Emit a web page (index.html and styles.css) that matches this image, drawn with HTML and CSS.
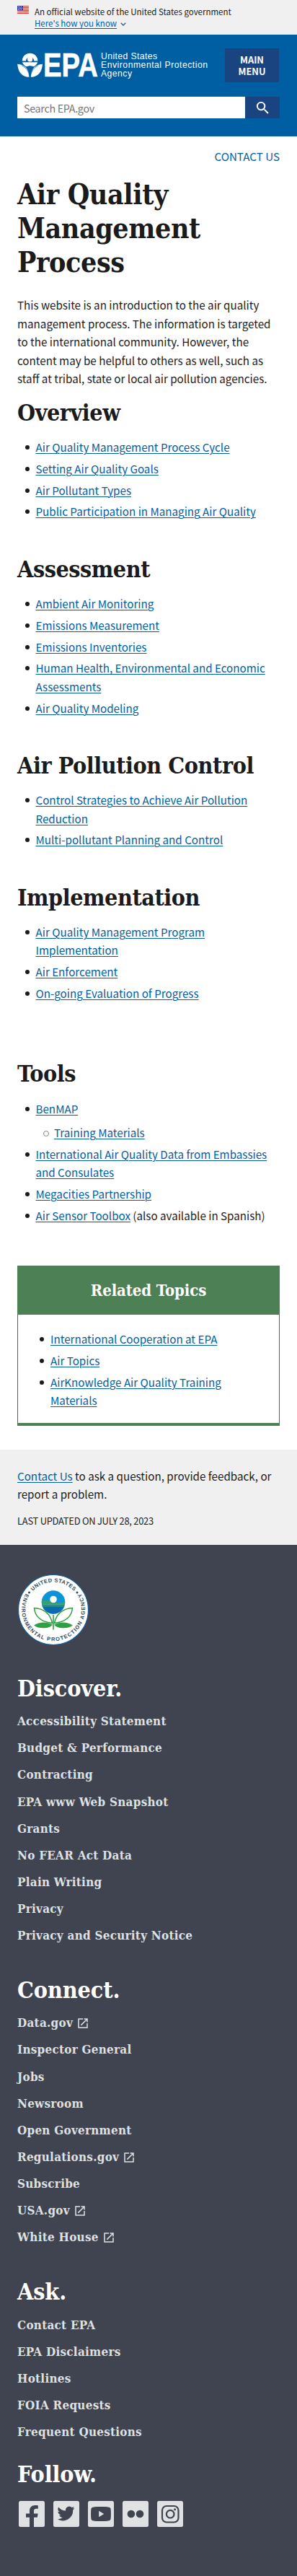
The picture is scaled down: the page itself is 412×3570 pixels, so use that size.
FILE: index.html
```html
<!DOCTYPE html>
<html lang="en">
<head>
<meta charset="utf-8">
<meta name="viewport" content="width=device-width, initial-scale=1">
<title>Air Quality Management Process | US EPA</title>
<link rel="stylesheet" href="styles.css">
</head>
<body>
<svg class="defs" width="0" height="0" aria-hidden="true">
  <symbol id="external" viewBox="0 0 24 24"><path d="M19 19H5V5h7V3H3v18h18v-9h-2v7zM14 3v2h3.6l-9.8 9.8 1.4 1.4L19 6.4V10h2V3h-7z"/></symbol>
</svg>

<div class="banner">
  <svg class="banner-flag" viewBox="0 0 16 11" width="16" height="11" aria-hidden="true">
    <path fill="#fff" d="M0 0h16v11H0z"/>
    <path fill="#d8392f" d="M0 0h16v1H0zM0 2h16v1H0zM0 4h16v1H0zM0 6h16v1H0zM0 8h16v1H0zM0 10h16v1H0z"/>
    <path fill="#2a35b3" d="M0 0h8v6.5H0z"/>
    <path fill="#fff" d="M1 1h1v1H1zM3 1h1v1H3zM5 1h1v1H5zM2 2.8h1v1H2zM4 2.8h1v1H4zM6 2.8h1v1H6zM1 4.6h1v1H1zM3 4.6h1v1H3zM5 4.6h1v1H5z"/>
  </svg>
  <div class="banner-text">
    <p>An official website of the United States government</p>
    <p><a href="#">Here's how you know</a><svg class="chevron" viewBox="0 0 8 5" width="8" height="5"><path d="M.7.8 4 4 7.300.8" fill="none" stroke="#2c5f8a" stroke-width="1.3"/></svg></p>
  </div>
</div>

<header class="header">
  <div class="header-top">
    <svg class="logo" viewBox="0 0 268 40" width="268" height="40" role="img" aria-label="US EPA">
      <g fill="#fff">
        <path d="M6.800 13.500a10.800 10.800 0 0 1 21.600 0h-5.200a5.600 5.600 0 0 0-11.200 0z"/>
        <circle cx="17.600" cy="11" r="3.600"/>
        <path d="M7 15.200h21.200c-1 2.800-2.900 4.700-5.400 6l-5.200-1.200-5.200 1.200c-2.500-1.300-4.400-3.200-5.400-6z"/>
        <path d="M.2 17.800C9.500 18.200 16 23.500 16.600 35.800 7 36 1 29.500.2 17.800z"/>
        <path d="M35 17.800C25.700 18.200 19.200 23.500 18.600 35.800 28.200 36 34.200 29.500 35 17.800z"/>
      </g>
      <path d="M6 19.500Q15.500 24 17.200 36M29.200 19.500Q19.700 24 18 36" fill="none" stroke="#005ea2" stroke-width=".7"/>
      <text class="logo-mark" x="36" y="35.300" textLength="76" lengthAdjust="spacingAndGlyphs">EPA</text>
      <text class="logo-name" x="116" y="10.900" textLength="78">United States</text>
      <text class="logo-name" x="116" y="23" textLength="148">Environmental Protection</text>
      <text class="logo-name" x="116" y="35.200" textLength="43">Agency</text>
    </svg>
    <button class="menu" type="button">MAIN MENU</button>
  </div>
  <form class="search">
    <div class="search-field">Search EPA.gov</div>
    <button class="search-button" type="button" aria-label="Search">
      <svg viewBox="0 0 24 24" width="23" height="23"><path fill="#fff" d="M15.500 14h-.79l-.28-.27A6.471 6.471 0 0 0 16 9.500 6.500 6.500 0 1 0 9.500 16c1.610 0 3.090-.59 4.230-1.570l.27.28v.79l5 4.990L20.490 19l-4.990-5zm-6 0C7.010 14 5 11.990 5 9.500S7.010 5 9.500 5 14 7.010 14 9.500 11.990 14 9.500 14z"/></svg>
    </button>
  </form>
</header>

<main class="main">
  <div class="contact"><a href="#">CONTACT US</a></div>
  <h1>Air Quality Management Process</h1>
  <p class="intro">This website is an introduction to the air quality management process. The information is targeted to the international community. However, the content may be helpful to others as well, such as staff at tribal, state or local air pollution agencies.</p>

  <section class="overview">
    <h2>Overview</h2>
    <ul class="list">
      <li><a href="#">Air Quality Management Process Cycle</a></li>
      <li><a href="#">Setting Air Quality Goals</a></li>
      <li><a href="#">Air Pollutant Types</a></li>
      <li><a href="#">Public Participation in Managing Air Quality</a></li>
    </ul>
  </section>
  <section class="topic">
    <h2>Assessment</h2>
    <ul class="list">
      <li><a href="#">Ambient Air Monitoring</a></li>
      <li><a href="#">Emissions Measurement</a></li>
      <li><a href="#">Emissions Inventories</a></li>
      <li><a href="#">Human Health, Environmental and Economic Assessments</a></li>
      <li><a href="#">Air Quality Modeling</a></li>
    </ul>
  </section>
  <section class="topic">
    <h2>Air Pollution Control</h2>
    <ul class="list">
      <li><a href="#">Control Strategies to Achieve Air Pollution Reduction</a></li>
      <li><a href="#">Multi-pollutant Planning and Control</a></li>
    </ul>
  </section>
  <section class="topic">
    <h2>Implementation</h2>
    <ul class="list">
      <li><a href="#">Air Quality Management Program Implementation</a></li>
      <li><a href="#">Air Enforcement</a></li>
      <li><a href="#">On-going Evaluation of Progress</a></li>
    </ul>
  </section>
  <section class="tools">
    <h2>Tools</h2>
    <ul class="list">
      <li><a href="#">BenMAP</a>
        <ul class="sublist"><li><a href="#">Training Materials</a></li></ul>
      </li>
      <li><a href="#">International Air Quality Data from Embassies and Consulates</a></li>
      <li><a href="#">Megacities Partnership</a></li>
      <li><a href="#">Air Sensor Toolbox</a> (also available in Spanish)</li>
    </ul>
  </section>

  <aside class="box">
    <h3>Related Topics</h3>
    <ul class="list">
      <li><a href="#">International Cooperation at EPA</a></li>
      <li><a href="#">Air Topics</a></li>
      <li><a href="#">AirKnowledge Air Quality Training Materials</a></li>
    </ul>
  </aside>
</main>

<div class="feedback">
  <p><a href="#">Contact Us</a> to ask a question, provide feedback, or report a problem.</p>
  <p class="updated">LAST UPDATED ON JULY 28, 2023</p>
</div>

<footer class="footer">
  <svg class="seal" viewBox="0 0 100 100" width="100" height="100" role="img" aria-label="EPA seal">
    <defs>
      <path id="arc-top" d="M11.500 50a38.500 38.500 0 0 1 77 0"/>
      <path id="arc-bottom" d="M18.500 18.500A44 44 0 1 0 81.500 18.500"/>
    </defs>
    <circle cx="50" cy="50" r="48.500" fill="#fff" stroke="#1b5c93" stroke-width="1.200"/>
    <text class="seal-text"><textPath href="#arc-top" startOffset="50%" text-anchor="middle" textLength="64">UNITED STATES</textPath></text>
    <text class="seal-text"><textPath href="#arc-bottom" startOffset="50%" text-anchor="middle" textLength="184">ENVIRONMENTAL PROTECTION AGENCY</textPath></text>
    <g fill="#274b66"><circle cx="16.500" cy="26" r="1.500"/><circle cx="83" cy="26" r="1.500"/></g>
    <clipPath id="ball"><circle cx="50" cy="39.500" r="16.300"/></clipPath>
    <g clip-path="url(#ball)">
      <path fill="#0c93d8" d="M30 20h40v20H30z"/>
      <path fill="#2fa36b" d="M30 38.500q10-3 20 0t20 0v5H30z"/>
      <path fill="#0a68b4" d="M30 43.500h40v15H30z"/>
      <path fill="none" stroke="#2fa36b" stroke-width=".8" d="M30 45.500h40"/>
    </g>
    <circle cx="50" cy="35.500" r="4.800" fill="#fff"/>
    <g fill="#fff" stroke="#2fa043" stroke-width="1.500">
      <path d="M23.500 47.500c1 12 9 19 25 21C46 55 36 48 23.500 47.500z"/>
      <path d="M76.500 47.500c-1 12-9 19-25 21C54 55 64 48 76.500 47.500z"/>
    </g>
    <g fill="#2fa043">
      <path d="M23 71.500c8-5.500 18-5 26-1-4 6-19 6.500-26 1zM77 71.500c-8-5.500-18-5-26-1 4 6 19 6.500 26 1z"/>
      <path d="M49.200 57h1.600v20.500h-1.600z"/>
    </g>
  </svg>

  <section class="footer-group">
    <h2>Discover.</h2>
    <ul>
      <li><a href="#">Accessibility Statement</a></li>
      <li><a href="#">Budget &amp; Performance</a></li>
      <li><a href="#">Contracting</a></li>
      <li><a href="#">EPA www Web Snapshot</a></li>
      <li><a href="#">Grants</a></li>
      <li><a href="#">No FEAR Act Data</a></li>
      <li><a href="#">Plain Writing</a></li>
      <li><a href="#">Privacy</a></li>
      <li><a href="#">Privacy and Security Notice</a></li>
    </ul>
  </section>
  <section class="footer-group">
    <h2>Connect.</h2>
    <ul>
      <li><a href="#">Data.gov</a><svg class="ext"><use href="#external"/></svg></li>
      <li><a href="#">Inspector General</a></li>
      <li><a href="#">Jobs</a></li>
      <li><a href="#">Newsroom</a></li>
      <li><a href="#">Open Government</a></li>
      <li><a href="#">Regulations.gov</a><svg class="ext"><use href="#external"/></svg></li>
      <li><a href="#">Subscribe</a></li>
      <li><a href="#">USA.gov</a><svg class="ext"><use href="#external"/></svg></li>
      <li><a href="#">White House</a><svg class="ext"><use href="#external"/></svg></li>
    </ul>
  </section>
  <section class="footer-group">
    <h2>Ask.</h2>
    <ul>
      <li><a href="#">Contact EPA</a></li>
      <li><a href="#">EPA Disclaimers</a></li>
      <li><a href="#">Hotlines</a></li>
      <li><a href="#">FOIA Requests</a></li>
      <li><a href="#">Frequent Questions</a></li>
    </ul>
  </section>
  <section class="footer-follow">
    <h2>Follow.</h2>
    <div class="social">
      <svg viewBox="0 0 36 36"><rect width="36" height="36" rx="2.500"/><path class="cut" d="M15 36V22.800h-5v-5.200h5v-3.800C15 8.800 18 6 22.700 6c1.600 0 2.900.1 4.100.3v4.500h-2.600c-2.500 0-3.200 1.300-3.200 3.100v3.700h5.600l-.8 5.200H21V36z"/></svg>
      <svg viewBox="0 0 36 36"><rect width="36" height="36" rx="2.500"/><path class="cut" transform="translate(5.400 4.800) scale(1.020)" d="M23.600 4.900a9.700 9.700 0 0 1-2.800.8 4.900 4.900 0 0 0 2.100-2.700 9.700 9.700 0 0 1-3.100 1.200 4.900 4.900 0 0 0-8.300 4.400A13.800 13.800 0 0 1 1.700 3.600a4.900 4.900 0 0 0 1.500 6.500A4.800 4.800 0 0 1 1 9.500c0 2.400 1.700 4.400 3.900 4.900a4.900 4.900 0 0 1-2.200.1 4.900 4.900 0 0 0 4.600 3.400A9.800 9.800 0 0 1 0 19.900a13.900 13.900 0 0 0 21.400-12.300 9.900 9.900 0 0 0 2.200-2.700z"/></svg>
      <svg viewBox="0 0 36 36"><rect width="36" height="36" rx="2.500"/><path class="cut" d="M18 8c10 0 12.500.5 13.400 2.500.7 2 .7 13 0 15C30.500 27.500 28 28 18 28S5.500 27.500 4.600 25.500c-.7-2-.7-13 0-15C5.500 8.500 8 8 18 8z"/><path d="m15.200 13.700 7 4.300-7 4.300z"/></svg>
      <svg viewBox="0 0 36 36"><rect width="36" height="36" rx="2.500"/><g class="cut"><circle cx="11.900" cy="18" r="5.300"/><circle cx="24" cy="18" r="5.300"/></g></svg>
      <svg viewBox="0 0 36 36"><rect width="36" height="36" rx="2.500"/><g class="line"><rect x="7" y="7" width="22.500" height="22.500" rx="6"/><circle cx="18.200" cy="18.200" r="5.300"/></g><circle class="cut" cx="24.600" cy="11.800" r="1.500"/></svg>
    </div>
  </section>
</footer>
</body>
</html>
```

FILE: styles.css
```css
* {
  box-sizing: border-box;
}

body {
  display: flex;
  flex-direction: column;
  min-height: 100vh;
  margin: 0;
  background: #fff;
  color: #1b1b1b;
  font-family: "Noto Sans CJK SC", "Open Sans", sans-serif;
  font-size: 15.18px;
  line-height: 25.44px;
}

h1, h2, h3, p, ul {
  margin: 0;
  padding: 0;
}

h1, h2, h3,
.footer li {
  font-family: "DejaVu Serif Condensed", "DejaVu Serif", serif;
  font-stretch: condensed;
  font-weight: 700;
}

a {
  color: #005ea2;
  text-decoration-thickness: 1px;
  text-underline-offset: 2px;
}

.defs {
  display: none;
}

/* Government banner */
.banner {
  display: flex;
  gap: 8px;
  height: 48px;
  padding: 8px 24px 0;
  background: #f0f0f0;
}

.banner-text {
  font-size: 11.5px;
  line-height: 16.3px;
}

.chevron {
  margin-left: 5px;
  vertical-align: 1px;
}

/* Site header */
.header {
  height: 141px;
  padding: 19px 24px 0;
  background: #005ea2;
}

.header-top {
  display: flex;
  justify-content: space-between;
  align-items: flex-start;
}

.logo {
  margin-top: 4px;
  overflow: visible;
}

.logo-mark {
  fill: #fff;
  stroke: #fff;
  stroke-width: .6;
  font: 700 47px "Liberation Sans", Arial, sans-serif;
}

.logo-name {
  fill: #fff;
  font: 12.2px "Liberation Sans", Arial, sans-serif;
}

.menu,
.search-button {
  border: 0;
  background: #1a4480;
  color: #fff;
}

.menu {
  width: 75px;
  height: 47px;
  margin-right: 1px;
  padding: 0 16px;
  font: 700 12.8px/16px "Noto Sans CJK SC", sans-serif;
}

.search {
  display: flex;
  margin-top: 20px;
}

.search-field {
  flex: 1;
  height: 30px;
  padding-left: 9px;
  background: #fff;
  color: #757575;
  font-size: 14.3px;
  letter-spacing: -.3px;
  line-height: 31px;
}

.search-button {
  display: flex;
  justify-content: center;
  align-items: center;
  width: 48px;
  height: 30px;
  padding: 0;
}

/* Page content */
.main {
  padding: 15px 24px 32.200px;
}

.contact {
  text-align: right;
}

.contact a {
  text-decoration: none;
}

h1 {
  margin-top: 17px;
  font-size: 39px;
  letter-spacing: -.4px;
  line-height: 46.6px;
}

.intro {
  margin-top: 24px;
}

h2 {
  font-size: 32px;
  letter-spacing: -.45px;
  line-height: 40px;
  white-space: nowrap;
}

.overview {
  margin-top: 14.6px;
}

.topic {
  margin-top: 47px;
}

.tools {
  margin-top: 78.600px;
}

.list {
  display: flex;
  flex-direction: column;
  gap: 4.4px;
  margin-top: 15px;
  padding-left: 25.5px;
  list-style: none;
}

.list > li {
  position: relative;
}

.list > li::before,
.sublist > li::before {
  content: "";
  position: absolute;
  top: 10px;
  left: -15px;
  width: 6px;
  height: 6px;
  border-radius: 50%;
  background: #1b1b1b;
}

.tools .list {
  margin-top: 16px;
}

.sublist {
  margin-top: 7.800px;
  padding-left: 25.5px;
  list-style: none;
}

.sublist > li {
  position: relative;
}

.sublist > li::before {
  border: 1px solid #888;
  background: none;
}

.box {
  margin-top: 56.400px;
  border: 1px solid #5c5f64;
  border-top: 0;
  border-bottom: 4px solid #4d8055;
}

.box h3 {
  margin: 0 -1px;
  background: #4d8055;
  color: #fff;
  font-size: 22px;
  letter-spacing: -.1px;
  line-height: 68.300px;
  text-align: center;
}

.box .list {
  margin: 21px 30px 18.700px 20px;
  padding-left: 25px;
}

/* Feedback strip */
.feedback {
  height: 132.700px;
  padding: 24px 24px 0;
  background: #f0f0f0;
}

.updated {
  margin-top: 14px;
  font-size: 12.9px;
  letter-spacing: -.25px;
  line-height: 20px;
}

/* Footer */
.footer {
  flex: 1;
  padding: 40px 24px 0;
  background: #3f4450;
  color: #dfe1e2;
}

.footer h2 {
  color: #fff;
  letter-spacing: -.1px;
}

.seal {
  display: block;
}

.seal-text {
  fill: #274b66;
  font: 700 7.4px "Liberation Sans", Arial, sans-serif;
}

.footer-group {
  margin-bottom: 43.900px;
}

.seal + .footer-group {
  margin-top: 38.500px;
}

.footer ul {
  display: flex;
  flex-direction: column;
  gap: 13.120px;
  margin-top: 13.400px;
  list-style: none;
}

.footer li {
  font-size: 16.900px;
  letter-spacing: .28px;
  line-height: 24px;
}

.footer a {
  color: inherit;
  text-decoration: none;
}

.ext {
  width: 18px;
  height: 18px;
  margin-left: 5px;
  fill: #dfe1e2;
  vertical-align: -4px;
}

.footer-follow {
  margin-top: -16.500px;
}

.social {
  display: flex;
  gap: 12px;
  margin: 17px 0 0 2px;
}

.social svg {
  width: 36px;
  height: 36px;
  fill: #dfe1e2;
}

.social .cut {
  fill: #3f4450;
}

.social .line {
  fill: none;
  stroke: #3f4450;
  stroke-width: 2.200;
}
```
